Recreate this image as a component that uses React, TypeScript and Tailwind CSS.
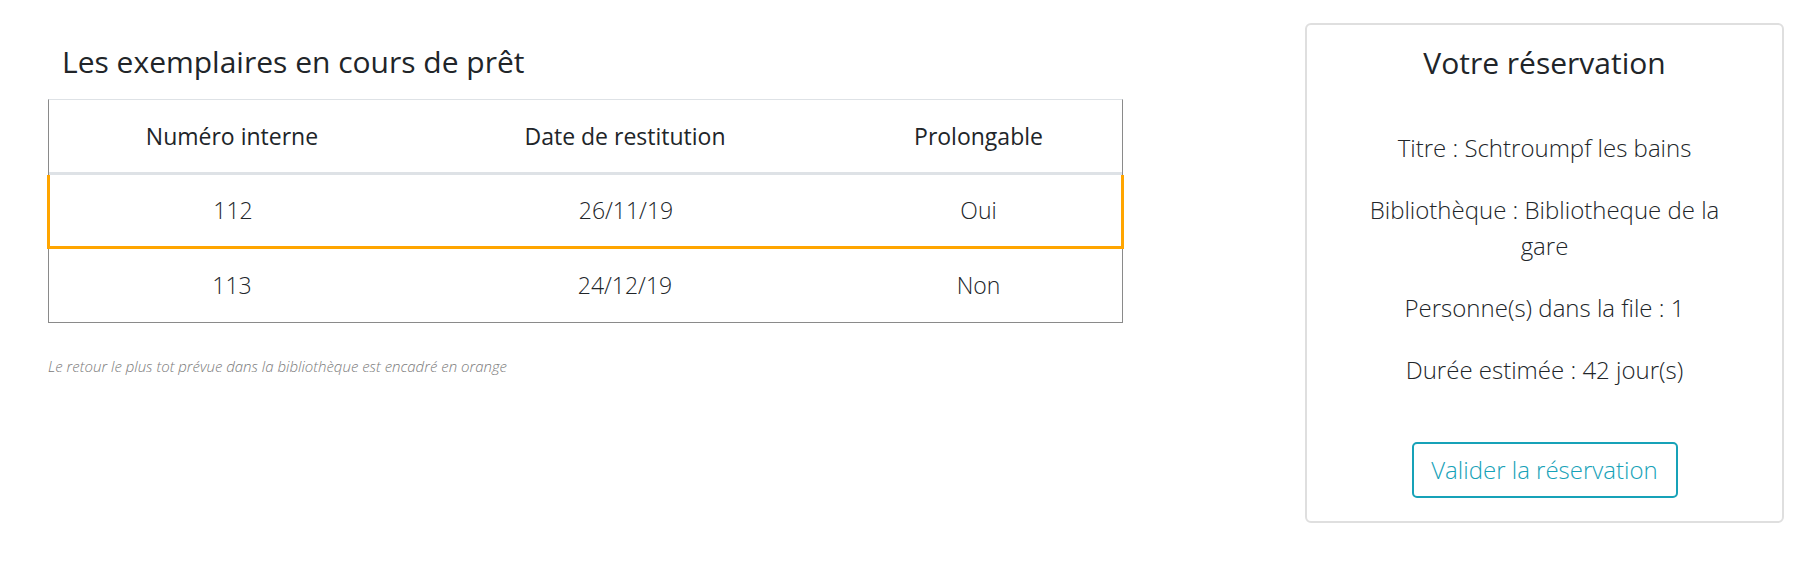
const rows = [
  { num: '112', date: '26/11/19', prolong: 'Oui', earliest: true },
  { num: '113', date: '24/12/19', prolong: 'Non', earliest: false },
];

const font = { fontFamily: '"Open Sans", "Noto Sans", sans-serif' };

export default function App() {
  return (
    <div className="w-[1820px] h-[580px] bg-white flex items-start text-[#212529]" style={font}>
      {/* Exemplaires en prêt */}
      <div className="ml-[48px] w-[1075px] flex flex-col">
        <h3 className="mt-[43px] ml-[14px] text-[30px] leading-[38px] font-normal text-[#212529]">
          Les exemplaires en cours de prêt
        </h3>
        <div className="mt-[18px] border-t border-t-[#dee2e6] border-x border-x-[#8a8a8a] border-b border-b-[#8a8a8a]">
          <div className="grid grid-cols-[366px_420px_1fr] h-[75px] border-b-[3px] border-b-[#dee2e6] text-[23px] font-normal">
            <div className="flex items-center justify-center">Numéro interne</div>
            <div className="flex items-center justify-center">Date de restitution</div>
            <div className="flex items-center justify-center">Prolongable</div>
          </div>
          {rows.map((r) =>
            r.earliest ? (
              <div
                key={r.num}
                className="-mx-[2px] grid grid-cols-[366px_420px_1fr] h-[74px] border-x-[3px] border-b-[3px] border-[#ffa500] text-[23px] font-light"
              >
                <div className="flex items-center justify-center">{r.num}</div>
                <div className="flex items-center justify-center">{r.date}</div>
                <div className="flex items-center justify-center">{r.prolong}</div>
              </div>
            ) : (
              <div key={r.num} className="grid grid-cols-[366px_420px_1fr] h-[73px] text-[23px] font-light">
                <div className="flex items-center justify-center">{r.num}</div>
                <div className="flex items-center justify-center">{r.date}</div>
                <div className="flex items-center justify-center">{r.prolong}</div>
              </div>
            )
          )}
        </div>
        <p className="mt-[33px] text-[15px] leading-[20px] italic font-light text-[#7a7a7a]">
          Le retour le plus tot prévue dans la bibliothèque est encadré en orange
        </p>
      </div>

      {/* Réservation */}
      <div className="ml-[182px] mt-[23px] w-[479px] h-[500px] border-2 border-[#dfdfdf] rounded-[6px] flex flex-col items-center text-center">
        <h3 className="mt-[19px] text-[30px] leading-[38px] font-normal text-[#212529]">Votre réservation</h3>
        <div className="mt-[48px] w-[380px] flex flex-col gap-[26px] text-[24px] leading-[36px] font-light text-[#212529]">
          <p>Titre : Schtroumpf les bains</p>
          <p>Bibliothèque : Bibliotheque de la gare</p>
          <p>Personne(s) dans la file : 1</p>
          <p>Durée estimée : 42 jour(s)</p>
        </div>
        <button className="mt-[54px] w-[266px] h-[56px] border-2 border-[#17a2b8] rounded-[5px] text-[24px] font-light text-[#17a2b8]">
          Valider la réservation
        </button>
      </div>
    </div>
  );
}
